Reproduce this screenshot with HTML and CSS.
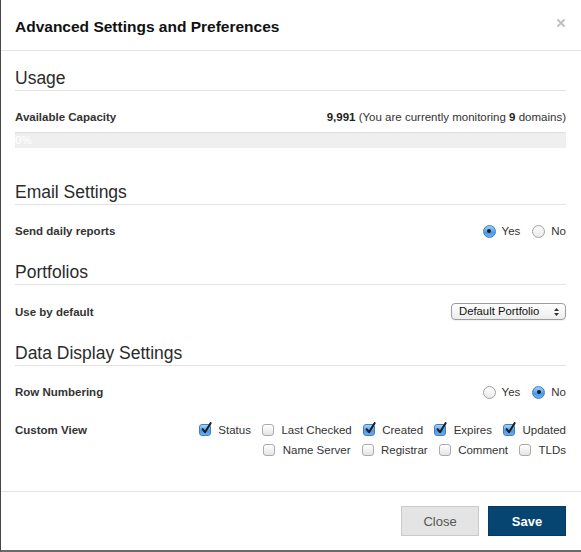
FILE: index.html
```html
<!DOCTYPE html>
<html lang="en">
<head>
<meta charset="utf-8">
<title>Advanced Settings and Preferences</title>
<link rel="stylesheet" href="styles.css">
</head>
<body>
<div class="modal">
  <header class="modal-header">
    <h1 class="modal-title">Advanced Settings and Preferences</h1>
    <button class="close" type="button" aria-label="Close">
      <svg width="8" height="8" viewBox="0 0 8 8"><path d="M1 1 L7 7 M7 1 L1 7" stroke="#bdbdbd" stroke-width="1.8" stroke-linecap="square"/></svg>
    </button>
  </header>

  <main class="modal-body">
    <section class="section section-usage">
      <h2 class="section-title">Usage</h2>
      <div class="row">
        <span class="label">Available Capacity</span>
        <span class="value"><b>9,991</b> (You are currently monitoring <b>9</b> domains)</span>
      </div>
      <div class="progress"><div class="progress-bar" style="width:0%">0%</div></div>
    </section>

    <section class="section">
      <h2 class="section-title">Email Settings</h2>
      <div class="row">
        <span class="label">Send daily reports</span>
        <span class="options">
          <span class="option"><span class="radio checked"></span>Yes</span>
          <span class="option"><span class="radio"></span>No</span>
        </span>
      </div>
    </section>

    <section class="section">
      <h2 class="section-title">Portfolios</h2>
      <div class="row">
        <span class="label">Use by default</span>
        <span class="select">Default Portfolio
          <svg class="select-arrows" width="5" height="8" viewBox="0 0 5 8"><path d="M2.5 0 L5 3 L0 3 Z M0 5 L5 5 L2.5 8 Z" fill="#333"/></svg>
        </span>
      </div>
    </section>

    <section class="section">
      <h2 class="section-title">Data Display Settings</h2>
      <div class="row">
        <span class="label">Row Numbering</span>
        <span class="options">
          <span class="option"><span class="radio"></span>Yes</span>
          <span class="option"><span class="radio checked"></span>No</span>
        </span>
      </div>
      <div class="row row-custom">
        <span class="label">Custom View</span>
        <div class="checks">
          <div class="check-line">
            <span class="option"><span class="checkbox checked"><svg class="tick" width="12" height="13" viewBox="0 0 12 13"><path d="M2.6 7.2 L5 10.2 L10.6 1.2" fill="none" stroke="#1b1f24" stroke-width="2.1" stroke-linecap="round" stroke-linejoin="round"/></svg></span>Status</span>
            <span class="option"><span class="checkbox"></span>Last Checked</span>
            <span class="option"><span class="checkbox checked"><svg class="tick" width="12" height="13" viewBox="0 0 12 13"><path d="M2.6 7.2 L5 10.2 L10.6 1.2" fill="none" stroke="#1b1f24" stroke-width="2.1" stroke-linecap="round" stroke-linejoin="round"/></svg></span>Created</span>
            <span class="option"><span class="checkbox checked"><svg class="tick" width="12" height="13" viewBox="0 0 12 13"><path d="M2.6 7.2 L5 10.2 L10.6 1.2" fill="none" stroke="#1b1f24" stroke-width="2.1" stroke-linecap="round" stroke-linejoin="round"/></svg></span>Expires</span>
            <span class="option"><span class="checkbox checked"><svg class="tick" width="12" height="13" viewBox="0 0 12 13"><path d="M2.6 7.2 L5 10.2 L10.6 1.2" fill="none" stroke="#1b1f24" stroke-width="2.1" stroke-linecap="round" stroke-linejoin="round"/></svg></span>Updated</span>
          </div>
          <div class="check-line">
            <span class="option"><span class="checkbox"></span>Name Server</span>
            <span class="option"><span class="checkbox"></span>Registrar</span>
            <span class="option"><span class="checkbox"></span>Comment</span>
            <span class="option"><span class="checkbox"></span>TLDs</span>
          </div>
        </div>
      </div>
    </section>
  </main>

  <footer class="modal-footer">
    <button class="btn btn-close" type="button">Close</button>
    <button class="btn btn-save" type="button">Save</button>
  </footer>
</div>
</body>
</html>
```

FILE: styles.css
```css
* { box-sizing: border-box; }

html, body {
  margin: 0;
  padding: 0;
  background: #fff;
}

body {
  font-family: "Liberation Sans", Arial, Helvetica, sans-serif;
  color: #333;
}

.modal {
  width: 581px;
  height: 552px;
  display: flex;
  flex-direction: column;
  background: #fff;
  border-left: 1px solid #464646;
  border-bottom: 2px solid #6b6b6b;
}

/* Header */
.modal-header {
  height: 51px;
  display: flex;
  justify-content: space-between;
  align-items: flex-start;
  padding: 17px 15px 0 14px;
  border-bottom: 1px solid #e6e6e6;
}

.modal-title {
  margin: 0;
  font-size: 15.5px;
  line-height: 20px;
  font-weight: bold;
  color: #111;
}

.close {
  margin: 2px 1px 0 0;
  padding: 0;
  border: 0;
  background: none;
  display: flex;
  cursor: pointer;
}

/* Body */
.modal-body {
  flex: 1;
  padding: 17px 15px 0 14px;
}

.section + .section {
  margin-top: 23px;
}

.section-usage + .section {
  margin-top: 34px;
}

.section-title {
  margin: 0;
  font-size: 17.5px;
  line-height: 20px;
  font-weight: normal;
  color: #2b2b2b;
  padding-bottom: 2px;
  border-bottom: 1px solid #e3e3e3;
}

.row {
  display: flex;
  justify-content: space-between;
  align-items: center;
  margin-top: 18px;
  font-size: 11.5px;
  line-height: 16px;
  min-height: 16px;
}

.label {
  font-weight: bold;
  color: #333;
}

.value {
  color: #333;
}

.value b {
  color: #222;
}

/* Progress */
.progress {
  margin-top: 7px;
  height: 16px;
  background: #efefef;
  box-shadow: inset 0 1px 1px rgba(0, 0, 0, 0.08);
  overflow: visible;
}

.progress-bar {
  height: 16px;
  font-size: 11.5px;
  line-height: 16px;
  color: #fff;
  white-space: nowrap;
}

/* Radios / checkboxes */
.options {
  display: flex;
  gap: 12px;
}

.option {
  display: inline-flex;
  align-items: center;
  color: #333;
}

.radio {
  position: relative;
  width: 13px;
  height: 13px;
  margin-right: 6px;
  border-radius: 50%;
  border: 1px solid #a3a3a3;
  background: linear-gradient(#ffffff, #e9e9e9);
  box-shadow: inset 0 1px 1px rgba(0, 0, 0, 0.06);
}

.radio.checked {
  border-color: #3f7fc4;
  background: linear-gradient(#a9d3fb, #4b9be6 60%, #6db0f0);
}

.radio.checked::after {
  content: "";
  position: absolute;
  left: 3.5px;
  top: 3.5px;
  width: 4px;
  height: 4px;
  border-radius: 50%;
  background: #15202b;
}

.row-custom {
  align-items: flex-start;
  margin-top: 20px;
  line-height: 20px;
}

.checks {
  display: flex;
  flex-direction: column;
  align-items: flex-end;
}

.check-line {
  display: flex;
  gap: 11px;
  height: 20px;
}

.checkbox {
  position: relative;
  width: 12px;
  height: 12px;
  margin-right: 7.5px;
  border-radius: 3px;
  border: 1px solid #ababab;
  background: linear-gradient(#ffffff, #e4e4e4);
}

.checkbox.checked {
  border-color: #3f7fc4;
  background: linear-gradient(#a9d3fb, #4b9be6 60%, #6db0f0);
}

.tick {
  position: absolute;
  left: 0;
  top: -3px;
}

/* Select */
.select {
  display: inline-flex;
  align-items: center;
  justify-content: space-between;
  width: 115px;
  height: 17px;
  padding: 0 6px 0 7px;
  border: 1px solid #9c9c9c;
  border-radius: 4px;
  background: linear-gradient(#ffffff, #ececec);
  box-shadow: 0 1px 0 rgba(0, 0, 0, 0.05);
  font-size: 11.3px;
  line-height: 15px;
  color: #111;
}

/* Footer */
.modal-footer {
  display: flex;
  justify-content: flex-end;
  gap: 9px;
  padding: 14px 15px 14px 14px;
  border-top: 1px solid #e3e3e3;
}

.btn {
  width: 78px;
  height: 30px;
  font-family: "Liberation Sans", Arial, sans-serif;
  font-size: 13px;
  cursor: pointer;
  padding: 0;
}

.btn-close {
  background: #e4e4e4;
  border: 1px solid #cacaca;
  color: #555;
}

.btn-save {
  background: #064471;
  border: 1px solid #043b64;
  color: #fff;
  font-weight: bold;
}
```
